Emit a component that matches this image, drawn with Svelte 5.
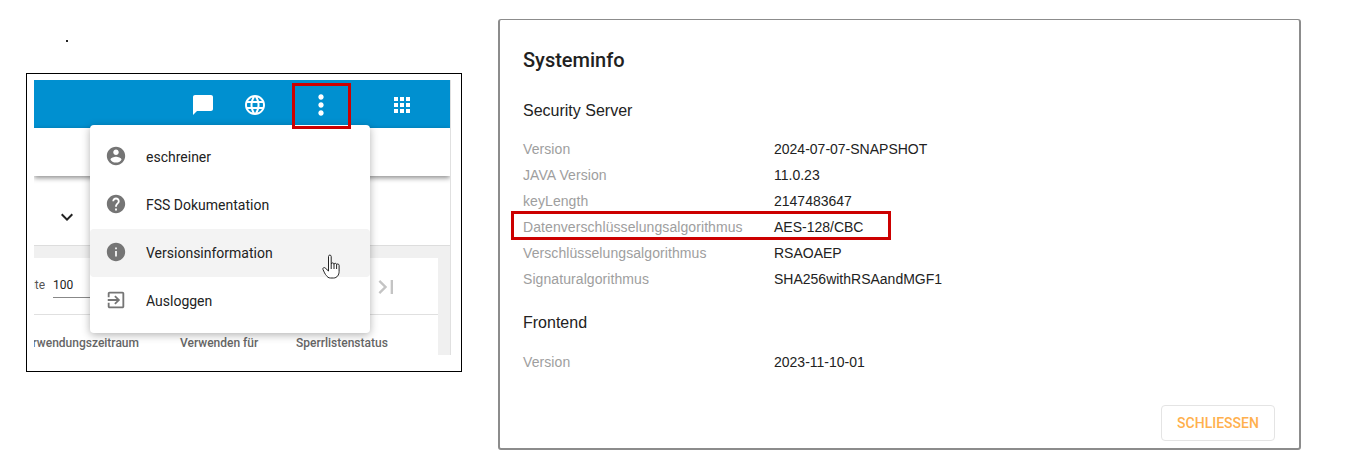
<script>
    const icons = {
        chat: 'M20 2H4c-1.1 0-1.99.9-1.99 2L2 22l4-4h14c1.1 0 2-.9 2-2V4c0-1.1-.9-2-2-2z',
        language: 'M11.99 2C6.47 2 2 6.48 2 12s4.47 10 9.99 10C17.52 22 22 17.52 22 12S17.52 2 11.99 2zm6.93 6h-2.95c-.32-1.25-.78-2.45-1.38-3.56 1.84.63 3.37 1.91 4.33 3.56zM12 4.04c.83 1.2 1.48 2.53 1.91 3.96h-3.82c.43-1.43 1.08-2.76 1.91-3.96zM4.26 14C4.1 13.36 4 12.69 4 12s.1-1.36.26-2h3.38c-.08.66-.14 1.32-.14 2 0 .68.06 1.34.14 2H4.26zm.82 2h2.95c.32 1.25.78 2.45 1.38 3.56-1.84-.63-3.37-1.9-4.33-3.56zm2.95-8H5.08c.96-1.66 2.49-2.93 4.33-3.56C8.81 5.55 8.35 6.75 8.03 8zM12 19.96c-.83-1.2-1.48-2.53-1.91-3.96h3.82c-.43 1.43-1.08 2.76-1.91 3.96zM14.34 14H9.66c-.09-.66-.16-1.32-.16-2 0-.68.07-1.35.16-2h4.68c.09.65.16 1.32.16 2 0 .68-.07 1.34-.16 2zm.25 5.56c.6-1.11 1.06-2.31 1.38-3.56h2.95c-.96 1.65-2.49 2.93-4.33 3.56zM16.36 14c.08-.66.14-1.32.14-2 0-.68-.06-1.34-.14-2h3.38c.16.64.26 1.31.26 2s-.1 1.36-.26 2h-3.38z',
        more: 'M12 8c1.1 0 2-.9 2-2s-.9-2-2-2-2 .9-2 2 .9 2 2 2zm0 2c-1.1 0-2 .9-2 2s.9 2 2 2 2-.9 2-2-.9-2-2-2zm0 6c-1.1 0-2 .9-2 2s.9 2 2 2 2-.9 2-2-.9-2-2-2z',
        apps: 'M4 8h4V4H4v4zm6 12h4v-4h-4v4zm-6 0h4v-4H4v4zm0-6h4v-4H4v4zm6 0h4v-4h-4v4zm6-10v4h4V4h-4zm-6 4h4V4h-4v4zm6 6h4v-4h-4v4zm0 6h4v-4h-4v4z',
        account: 'M12 2C6.48 2 2 6.48 2 12s4.48 10 10 10 10-4.48 10-10S17.52 2 12 2zm0 3c1.66 0 3 1.34 3 3s-1.34 3-3 3-3-1.34-3-3 1.34-3 3-3zm0 14.2c-2.5 0-4.71-1.28-6-3.22.03-1.99 4-3.08 6-3.08 1.99 0 5.97 1.09 6 3.08-1.29 1.94-3.5 3.22-6 3.22z',
        help: 'M12 2C6.48 2 2 6.48 2 12s4.48 10 10 10 10-4.48 10-10S17.52 2 12 2zm1 17h-2v-2h2v2zm2.07-7.75l-.9.92C13.45 12.9 13 13.5 13 15h-2v-.5c0-1.1.45-2.1 1.17-2.83l1.24-1.26c.37-.36.59-.86.59-1.41 0-1.1-.9-2-2-2s-2 .9-2 2H8c0-2.21 1.79-4 4-4s4 1.79 4 4c0 .88-.36 1.68-.93 2.25z',
        info: 'M12 2C6.48 2 2 6.48 2 12s4.48 10 10 10 10-4.48 10-10S17.52 2 12 2zm1 15h-2v-6h2v6zm0-8h-2V7h2v2z',
        exit: 'M10.09 15.59L11.5 17l5-5-5-5-1.41 1.41L12.67 11H3v2h9.67l-2.58 2.59zM19 3H5c-1.11 0-2 .9-2 2v4h2V5h14v14H5v-4H3v4c0 1.1.89 2 2 2h14c1.1 0 2-.9 2-2V5c0-1.1-.9-2-2-2z',
        down: 'M7.41 8.59L12 13.17l4.59-4.58L18 10l-6 6-6-6 1.41-1.41z',
        last: 'M5.59 7.41L10.18 12l-4.59 4.59L7 18l6-6-6-6zM16 6h2v12h-2z'
    };

    const menu = [
        { icon: icons.account, label: 'eschreiner' },
        { icon: icons.help, label: 'FSS Dokumentation' },
        { icon: icons.info, label: 'Versionsinformation', hover: true },
        { icon: icons.exit, label: 'Ausloggen' }
    ];

    const serverInfo = [
        { label: 'Version', value: '2024-07-07-SNAPSHOT' },
        { label: 'JAVA Version', value: '11.0.23' },
        { label: 'keyLength', value: '2147483647' },
        { label: 'Datenverschlüsselungsalgorithmus', value: 'AES-128/CBC', marked: true },
        { label: 'Verschlüsselungsalgorithmus', value: 'RSAOAEP' },
        { label: 'Signaturalgorithmus', value: 'SHA256withRSAandMGF1' }
    ];
</script>

<main>
    <section class="left">
        <div class="dot"></div>
        <div class="frame">
            <div class="shot">
                <div class="topbar">
                    <svg class="bar-icon chat" viewBox="0 0 24 24"><path d={icons.chat} /></svg>
                    <svg class="bar-icon globe" viewBox="0 0 24 24"><path d={icons.language} /></svg>
                    <svg class="bar-icon more" viewBox="0 0 24 24"><path d={icons.more} /></svg>
                    <svg class="bar-icon apps" viewBox="0 0 24 24"><path d={icons.apps} /></svg>
                </div>
                <div class="subbar"></div>
                <div class="filter">
                    <svg class="chevron" viewBox="0 0 24 24"><path d={icons.down} /></svg>
                </div>
                <div class="content">
                    <div class="card">
                        <div class="pager">
                            <span class="pager-label"><span>Einträge pro Seite</span></span>
                            <span class="pager-value">100</span>
                            <svg class="last" viewBox="0 0 24 24"><path d={icons.last} /></svg>
                        </div>
                        <div class="columns">
                            <span class="col-first"><span>Verwendungszeitraum</span></span>
                            <span class="col">Verwenden für</span>
                            <span class="col">Sperrlistenstatus</span>
                        </div>
                    </div>
                </div>

                <div class="menu">
                    {#each menu as item}
                        <div class="menu-item" class:hover={item.hover}>
                            <svg viewBox="0 0 24 24"><path d={item.icon} /></svg>
                            <span>{item.label}</span>
                        </div>
                    {/each}
                </div>
                <div class="mark-more"></div>
                <svg class="cursor" viewBox="0 0 19 25">
                    <path d="M6.500 2.500c0-1.900 2.700-1.900 2.700 0v7.500c.2-1.500 2.700-1.500 2.800.2.300-1.300 2.500-1.200 2.600.4.500-1 2.400-.8 2.500.7v6.200c0 3.200-2 6.500-5.500 6.500H8.500c-2 0-3.200-1-4.200-2.600C3.300 20.800 1.800 17.200 1 15.500c-.6-1.400 1-2.600 2.200-1.500l3.300 3z" />
                    <path d="M9.200 10v5M12 10v5M14.600 10.500v4.500" />
                </svg>
            </div>
        </div>
    </section>

    <section class="dialog">
        <h1>Systeminfo</h1>
        <h2>Security Server</h2>
        <div class="rows">
            {#each serverInfo as row}
                <div class="row" class:marked={row.marked}>
                    <span class="key">{row.label}</span>
                    <span class="value">{row.value}</span>
                </div>
            {/each}
        </div>
        <h2 class="frontend">Frontend</h2>
        <div class="rows front-rows">
            <div class="row">
                <span class="key">Version</span>
                <span class="value">2023-11-10-01</span>
            </div>
        </div>
        <div class="actions">
            <button>SCHLIESSEN</button>
        </div>
    </section>
</main>

<style>
    :global(body) {
        margin: 0;
        background: #fff;
    }

    main {
        display: flex;
        align-items: flex-start;
        width: 1348px;
        height: 468px;
        box-sizing: border-box;
        padding: 19px 0 0 26px;
        gap: 36px;
        overflow: hidden;
    }

    .left {
        width: 436px;
    }

    .dot {
        width: 2px;
        height: 2px;
        margin: 21px 0 31px 40px;
        background: #222;
    }

    .frame {
        box-sizing: border-box;
        width: 436px;
        height: 299px;
        border: 1px solid #000;
        padding: 6px 10px 16px 7px;
    }

    .shot {
        position: relative;
        height: 275px;
        overflow: hidden;
        background: #f0f0f0;
        border-right: 1px solid #e0e0e0;
        font-family: Roboto, sans-serif;
    }

    .topbar {
        display: flex;
        align-items: center;
        box-sizing: border-box;
        height: 48px;
        background: #0090d0;
        padding: 2px 0 0 157px;
    }

    .bar-icon {
        width: 24px;
        height: 24px;
        fill: #fff;
        flex: none;
    }

    .globe {
        margin-left: 28px;
    }

    .bar-icon.more {
        width: 32px;
        height: 32px;
        margin-left: 38px;
    }

    .apps {
        margin-left: 53px;
    }

    .subbar {
        position: relative;
        height: 48px;
        background: #fff;
        box-shadow: 0 2px 5px rgba(0, 0, 0, 0.45);
    }

    .filter {
        box-sizing: border-box;
        height: 70px;
        background: #fff;
        border-bottom: 1px solid #ddd;
        padding: 29px 0 0 21px;
    }

    .chevron {
        display: block;
        width: 24px;
        height: 24px;
        fill: #222;
    }

    .content {
        padding: 12px 12px 0 0;
    }

    .card {
        background: #fff;
        height: 97px;
    }

    .pager {
        display: flex;
        align-items: flex-start;
        height: 57px;
        box-sizing: border-box;
        border-bottom: 1px solid #e0e0e0;
        font-size: 12px;
        color: #555;
        padding-top: 20px;
    }

    .pager-label {
        display: flex;
        justify-content: flex-end;
        width: 11px;
        overflow: hidden;
        white-space: nowrap;
        flex: none;
    }

    .pager-value {
        width: 47px;
        height: 19px;
        margin-left: 8px;
        border-bottom: 1px solid #888;
        color: #222;
        flex: none;
    }

    .last {
        width: 28px;
        height: 28px;
        margin: -5px 0 0 272px;
        fill: #c4c4c4;
        flex: none;
    }

    .columns {
        display: flex;
        padding-top: 21px;
        font-size: 12px;
        font-weight: 500;
        color: #666;
        white-space: nowrap;
    }

    .col-first {
        display: flex;
        justify-content: flex-end;
        width: 105px;
        overflow: hidden;
        flex: none;
    }

    .col {
        width: 116px;
        flex: none;
    }

    .col-first + .col {
        margin-left: 41px;
    }

    .menu {
        position: absolute;
        left: 56px;
        top: 45px;
        width: 280px;
        box-sizing: border-box;
        padding: 8px 0;
        background: #fff;
        border-radius: 4px;
        box-shadow: 0 2px 8px rgba(0, 0, 0, 0.3);
    }

    .menu-item {
        display: flex;
        align-items: center;
        height: 48px;
        padding-left: 15px;
        font-size: 14px;
        color: #222;
    }

    .menu-item.hover {
        background: #f3f3f3;
        border-radius: 4px;
    }

    .menu-item svg {
        width: 22px;
        height: 22px;
        fill: #757575;
        margin: -2px 19px 0 0;
        flex: none;
    }

    .mark-more {
        position: absolute;
        left: 258px;
        top: 3px;
        width: 59px;
        height: 46px;
        box-sizing: border-box;
        border: 3px solid #cc0000;
    }

    .cursor {
        position: absolute;
        left: 288px;
        top: 174px;
        width: 19px;
        height: 25px;
        fill: #fff;
        stroke: #222;
        stroke-width: 1;
    }

    .dialog {
        box-sizing: border-box;
        width: 803px;
        height: 431px;
        border: 2px solid #8c8c8c;
        border-top-width: 1px;
        border-radius: 3px;
        padding: 28px 24px 0 23px;
        font-family: "Liberation Sans", Arial, sans-serif;
        color: #222;
    }

    h1 {
        margin: 0;
        font: 500 20px/24px Roboto, sans-serif;
        color: #212121;
    }

    h2 {
        margin: 29px 0 0;
        font-size: 16px;
        font-weight: 400;
        line-height: 20px;
    }

    h2.frontend {
        margin-top: 21px;
    }

    .rows {
        margin-top: 15px;
    }

    .front-rows {
        margin-top: 16px;
    }

    .row {
        position: relative;
        display: flex;
        height: 26px;
        align-items: center;
        font-size: 14px;
    }

    .row.marked::after {
        content: '';
        position: absolute;
        left: -12px;
        top: -3px;
        width: 380px;
        height: 29px;
        box-sizing: border-box;
        border: 3px solid #cc0000;
    }

    .key {
        width: 251px;
        color: #9e9e9e;
        letter-spacing: 0.08px;
        flex: none;
    }

    .value {
        color: #222;
    }

    .actions {
        display: flex;
        justify-content: flex-end;
        margin-top: 30px;
    }

    button {
        width: 114px;
        height: 36px;
        background: #fff;
        border: 1px solid #e4e4e4;
        border-radius: 4px;
        color: #ffb04d;
        font: 500 14px Roboto, sans-serif;
    }
</style>
